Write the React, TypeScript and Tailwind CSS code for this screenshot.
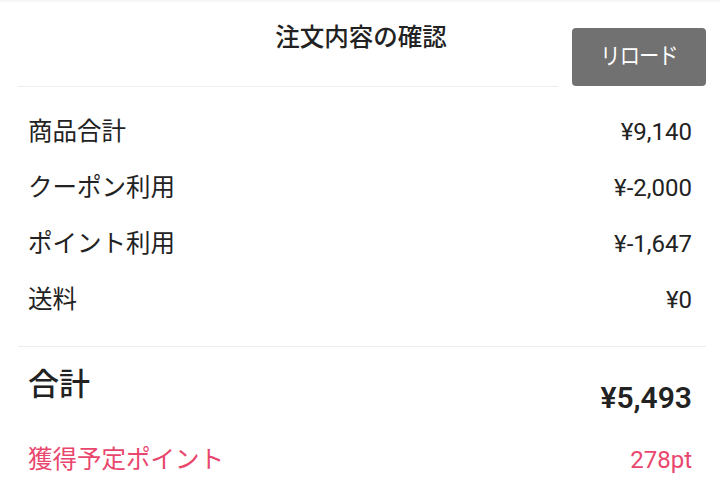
const rows = [
  { label: "商品合計", value: "¥9,140" },
  { label: "クーポン利用", value: "¥-2,000" },
  { label: "ポイント利用", value: "¥-1,647" },
  { label: "送料", value: "¥0" },
];

export default function App() {
  return (
    <div
      className="w-[720px] h-[494px] bg-white text-[#222] border-t-2 border-[#f6f6f6] overflow-hidden"
      style={{ fontFamily: 'Roboto, "Noto Sans CJK JP", sans-serif' }}
    >
      <div className="flex">
        <div className="flex-1 ml-[18px] h-[85px] border-b border-[#eeeeee] pt-[20px] pl-[146px] text-center">
          <h1 className="text-[24.5px] leading-[32px] font-medium">注文内容の確認</h1>
        </div>
        <button className="mt-[26px] ml-[14px] mr-[14px] w-[134px] h-[58px] rounded-[4px] bg-[#717171] text-white text-[23px]">
          <span className="inline-block scale-x-[0.88] tracking-[-1px]">リロード</span>
        </button>
      </div>

      <div className="mt-[17px] px-[28px]">
        {rows.map((r) => (
          <div key={r.label} className="flex h-[56px] items-center justify-between text-[24.5px]">
            <span>{r.label}</span>
            <span className="text-[24px]">{r.value}</span>
          </div>
        ))}
      </div>

      <div className="mt-[18px] ml-[18px] mr-[14px] border-t border-[#eeeeee]" />

      <div className="px-[28px]">
        <div className="flex items-start justify-between pt-[20px]">
          <span className="text-[31px] leading-[36px] font-medium">合計</span>
          <span className="pt-[13px] text-[30px] leading-[36px] font-semibold">¥5,493</span>
        </div>
        <div className="mt-[28px] flex h-[32px] items-center justify-between text-[24.5px] text-[#e9466d]">
          <span>獲得予定ポイント</span>
          <span className="text-[24px]">278pt</span>
        </div>
      </div>
    </div>
  );
}
